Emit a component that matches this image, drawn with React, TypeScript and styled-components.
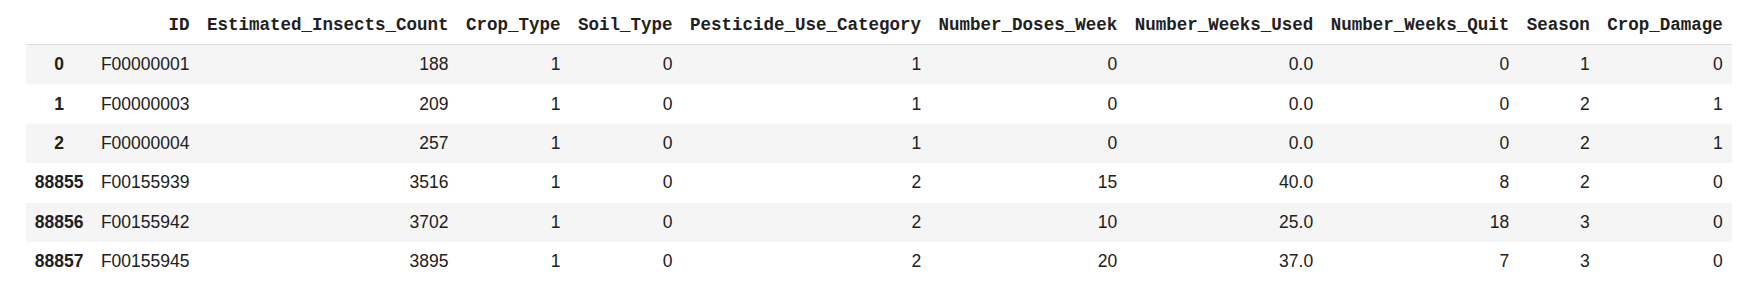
import React from "react";
import styled, { createGlobalStyle } from "styled-components";

const Global = createGlobalStyle`
  html, body { margin: 0; padding: 0; background: #ffffff; }
`;

const Table = styled.table`
  margin: 6px 0 0 26px;
  border-collapse: collapse;
  border-spacing: 0;
  border: none;
  font-family: "Liberation Sans", Arial, sans-serif;
  font-size: 17.5px;
  color: #212121;
`;

const HeadCell = styled.th`
  font-family: "Liberation Mono", "Courier New", monospace;
  font-weight: bold;
  text-align: right;
  padding: 0 8.75px;
  height: 38px;
  white-space: nowrap;
  border-bottom: 1px solid #dcdcdc;
  vertical-align: middle;
`;

const Row = styled.tr<{ $striped: boolean }>`
  background: ${(p) => (p.$striped ? "#f5f5f5" : "#ffffff")};
`;

const IndexCell = styled.th`
  font-family: "Liberation Sans", Arial, sans-serif;
  font-weight: bold;
  text-align: center;
  padding: 0 8.75px;
  height: 39.4px;
  vertical-align: middle;
`;

const Cell = styled.td`
  text-align: right;
  padding: 0 8.75px;
  height: 39.4px;
  white-space: nowrap;
  vertical-align: middle;
`;

const columns = [
  "ID",
  "Estimated_Insects_Count",
  "Crop_Type",
  "Soil_Type",
  "Pesticide_Use_Category",
  "Number_Doses_Week",
  "Number_Weeks_Used",
  "Number_Weeks_Quit",
  "Season",
  "Crop_Damage",
];

const rows: [string, string[]][] = [
  ["0", ["F00000001", "188", "1", "0", "1", "0", "0.0", "0", "1", "0"]],
  ["1", ["F00000003", "209", "1", "0", "1", "0", "0.0", "0", "2", "1"]],
  ["2", ["F00000004", "257", "1", "0", "1", "0", "0.0", "0", "2", "1"]],
  ["88855", ["F00155939", "3516", "1", "0", "2", "15", "40.0", "8", "2", "0"]],
  ["88856", ["F00155942", "3702", "1", "0", "2", "10", "25.0", "18", "3", "0"]],
  ["88857", ["F00155945", "3895", "1", "0", "2", "20", "37.0", "7", "3", "0"]],
];

export default function App() {
  return (
    <>
      <Global />
      <Table>
        <thead>
          <tr>
            <HeadCell />
            {columns.map((c) => (
              <HeadCell key={c}>{c}</HeadCell>
            ))}
          </tr>
        </thead>
        <tbody>
          {rows.map(([idx, vals], i) => (
            <Row key={idx} $striped={i % 2 === 0}>
              <IndexCell>{idx}</IndexCell>
              {vals.map((v, j) => (
                <Cell key={j}>{v}</Cell>
              ))}
            </Row>
          ))}
        </tbody>
      </Table>
    </>
  );
}
